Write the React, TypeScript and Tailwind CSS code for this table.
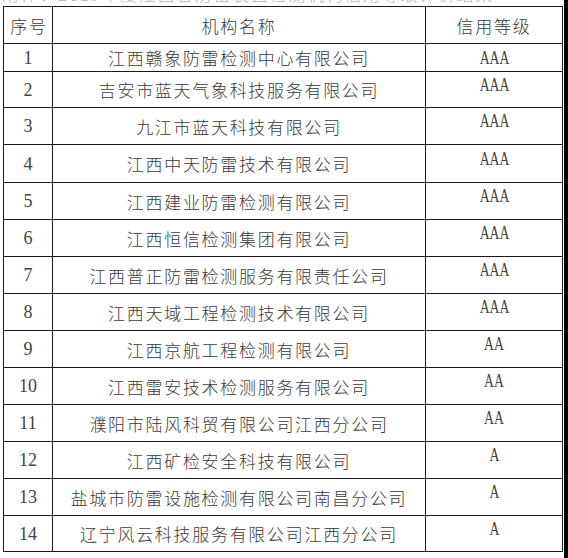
import React from "react";

const rows: { n: string; name: string; grade: string; h: string }[] = [
  { n: "1", name: "江西赣象防雷检测中心有限公司", grade: "AAA", h: "h-[28px]" },
  { n: "2", name: "吉安市蓝天气象科技服务有限公司", grade: "AAA", h: "h-[36px]" },
  { n: "3", name: "九江市蓝天科技有限公司", grade: "AAA", h: "h-[37px]" },
  { n: "4", name: "江西中天防雷技术有限公司", grade: "AAA", h: "h-[38px]" },
  { n: "5", name: "江西建业防雷检测有限公司", grade: "AAA", h: "h-[37px]" },
  { n: "6", name: "江西恒信检测集团有限公司", grade: "AAA", h: "h-[37px]" },
  { n: "7", name: "江西普正防雷检测服务有限责任公司", grade: "AAA", h: "h-[37px]" },
  { n: "8", name: "江西天域工程检测技术有限公司", grade: "AAA", h: "h-[37px]" },
  { n: "9", name: "江西京航工程检测有限公司", grade: "AA", h: "h-[37px]" },
  { n: "10", name: "江西雷安技术检测服务有限公司", grade: "AA", h: "h-[37px]" },
  { n: "11", name: "濮阳市陆风科贸有限公司江西分公司", grade: "AA", h: "h-[37px]" },
  { n: "12", name: "江西矿检安全科技有限公司", grade: "A", h: "h-[37px]" },
  { n: "13", name: "盐城市防雷设施检测有限公司南昌分公司", grade: "A", h: "h-[37px]" },
  { n: "14", name: "辽宁风云科技服务有限公司江西分公司", grade: "A", h: "h-[36px]" },
];

const cjk =
  "font-['Noto_Sans_CJK_SC',sans-serif] font-light text-[17px] tracking-[1.7px] text-[#3a3a3a] leading-none";
const serif = "font-['Liberation_Serif',serif] text-[18px] text-[#444] leading-none";

export default function App() {
  return (
    <div className="w-[568px] h-[558px] bg-white flex overflow-hidden">
      <div className="w-[564px] flex flex-col">
        <div className="h-[6px] overflow-hidden">
          <div className="font-['Noto_Sans_CJK_SC',sans-serif] font-light text-[17px] tracking-[1.7px] leading-none text-[#b5b5b5] -mt-[15px] pl-[2px] whitespace-nowrap">
            附件：2019年度江西省防雷装置检测机构信用等级评价结果
          </div>
        </div>
        <div className="ml-[3px] w-[560px] border-l border-t border-[#1a1a1a] flex flex-col">
          <div className="flex h-[37px] border-b border-[#1a1a1a]">
            <div className={`w-[49px] border-r border-[#1a1a1a] flex items-center justify-center pl-[2px] ${cjk}`}>
              序号
            </div>
            <div className={`w-[373px] border-r border-[#1a1a1a] flex items-center justify-center ${cjk}`}>
              机构名称
            </div>
            <div className={`w-[137px] border-r border-[#1a1a1a] flex items-center justify-center ${cjk}`}>
              信用等级
            </div>
          </div>
          {rows.map((r, i) => (
            <div key={r.n} className={`flex ${r.h} border-b border-[#1a1a1a]`}>
              <div className={`w-[49px] border-r border-[#1a1a1a] flex items-center justify-center ${serif}`}>
                {r.n}
              </div>
              <div className={`w-[373px] border-r border-[#1a1a1a] flex items-center justify-center ${cjk}`}>
                {r.name}
              </div>
              <div
                className={`w-[137px] border-r border-[#1a1a1a] flex items-center justify-center ${
                  i === 0 ? "pb-0" : "pb-[10px]"
                } ${serif}`}
              >
                <span className="inline-block scale-x-[0.76]">{r.grade}</span>
              </div>
            </div>
          ))}
        </div>
      </div>
      <div className="w-[4px] h-full bg-black" />
    </div>
  );
}
